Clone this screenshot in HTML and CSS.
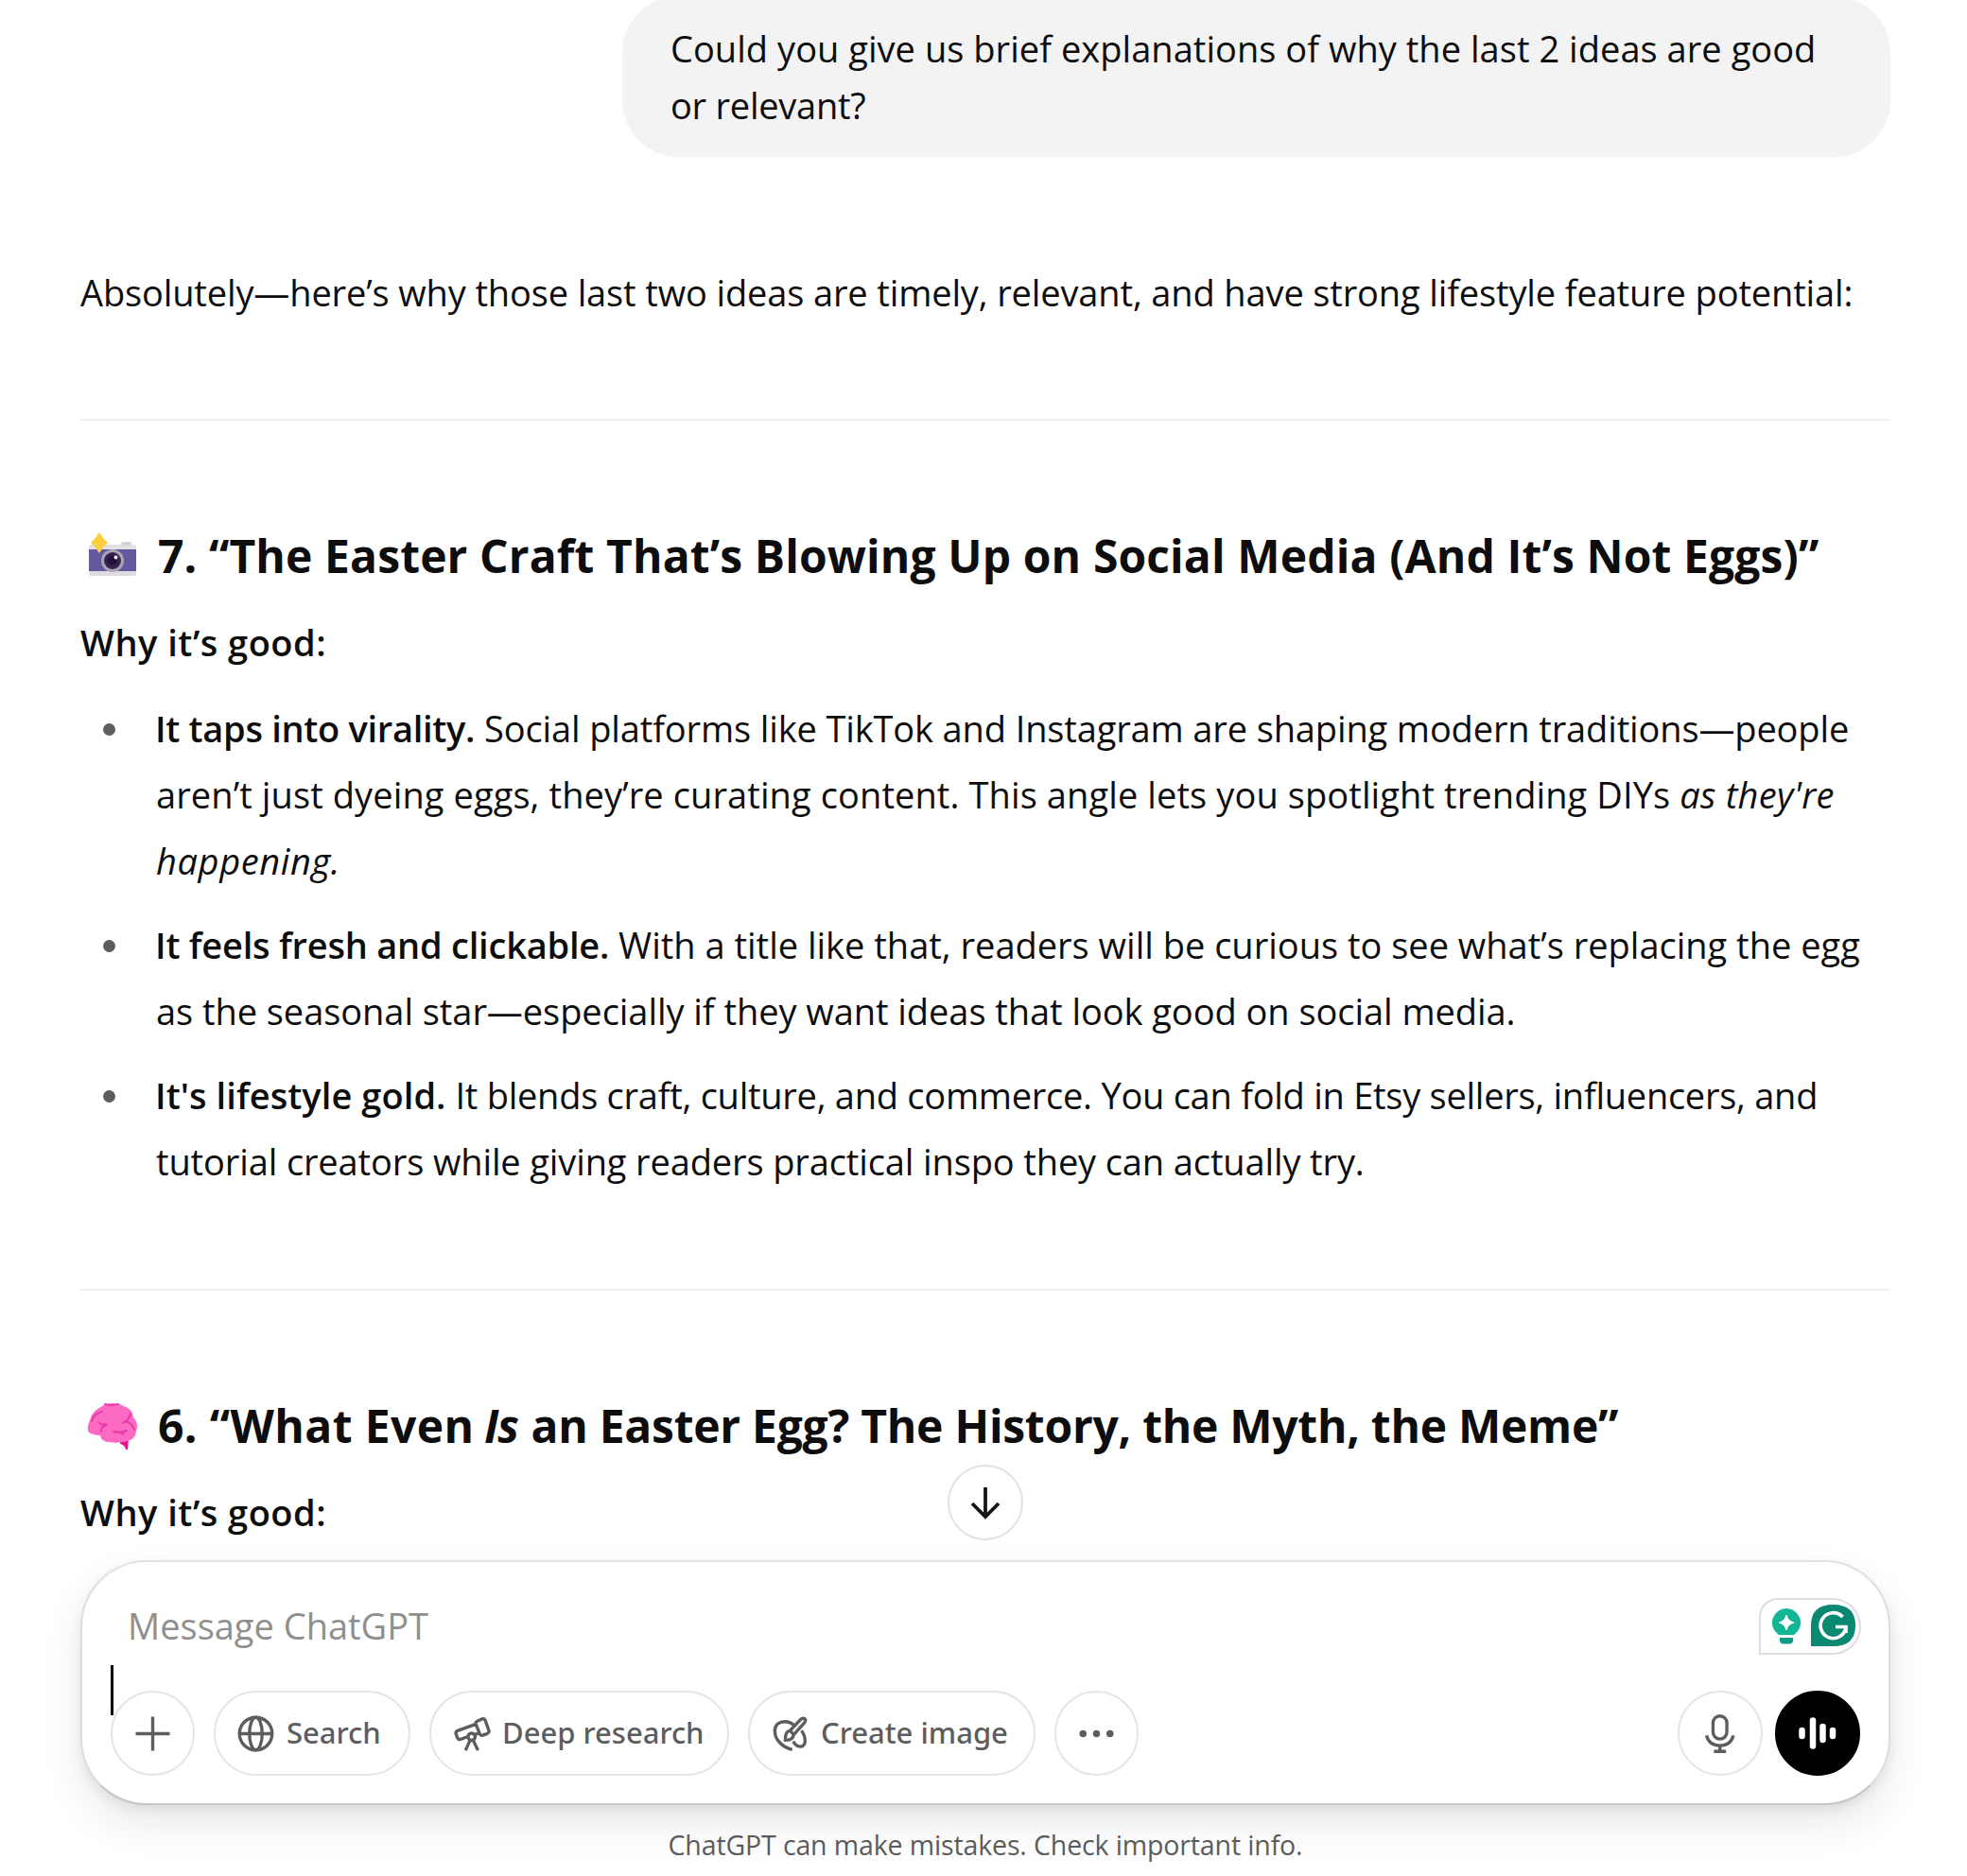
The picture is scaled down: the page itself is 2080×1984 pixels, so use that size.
FILE: index.html
```html
<!DOCTYPE html>
<html lang="en">
<head>
<meta charset="utf-8">
<title>ChatGPT</title>
<link rel="stylesheet" href="styles.css">
</head>
<body>
<div class="page">
  <main class="thread">
    <div class="bubble"><span class="line t1">Could you give us brief explanations of why the last 2 ideas are good</span> <span class="line t2">or relevant?</span></div>

    <p class="intro">Absolutely—here’s why those last two ideas are timely, relevant, and have strong lifestyle feature potential:</p>
    <hr>

    <h3 class="title">
      <svg class="emoji" viewBox="0 0 54 54" aria-hidden="true">
        <rect x="3" y="15" width="50" height="12" rx="3" fill="#e4e1e6"/>
        <rect x="37" y="12" width="11" height="4" rx="2" fill="#d5d2d8"/>
        <rect x="3" y="20" width="50" height="23" fill="#6458a0"/>
        <path d="M3 43h50v3q0 2-2 2H5q-2 0-2-2z" fill="#dedbe2"/>
        <circle cx="28" cy="32" r="12" fill="#aaa5b0"/>
        <circle cx="28" cy="32" r="9" fill="#35234f"/>
        <circle cx="28" cy="32" r="5" fill="#20133b"/>
        <circle cx="31.500" cy="28.500" r="2" fill="#f4effa"/>
        <path d="M14 3Q17 9 22 13Q17 17 14 23Q11 17 6 13Q11 9 14 3Z" fill="#fccf3c" stroke="#fccf3c" stroke-width="1.500" stroke-linejoin="round"/>
      </svg>
      <span class="h7">7. “The Easter Craft That’s Blowing Up on Social Media (And It’s Not Eggs)”</span>
    </h3>
    <p class="why">Why it’s good:</p>
    <ul>
      <li><span class="line"><b class="b1">It taps into virality.</b> <span class="t3">Social platforms like TikTok and Instagram are shaping modern traditions—people</span></span>
        <span class="line"><span class="t4">aren’t just dyeing eggs, they’re curating content. This angle lets you spotlight trending DIYs</span> <em>as they're</em></span>
        <span class="line"><em class="t5">happening.</em></span></li>
      <li><span class="line"><b class="b2">It feels fresh and clickable.</b> <span class="t6">With a title like that, readers will be curious to see what’s replacing the egg</span></span>
        <span class="line t7">as the seasonal star—especially if they want ideas that look good on social media.</span></li>
      <li><span class="line"><b class="b3">It's lifestyle gold.</b> <span class="t8">It blends craft, culture, and commerce. You can fold in Etsy sellers, influencers, and</span></span>
        <span class="line t9">tutorial creators while giving readers practical inspo they can actually try.</span></li>
    </ul>
    <hr>

    <h3 class="title">
      <svg class="emoji" viewBox="0 0 54 54" aria-hidden="true">
        <path d="M36 40h9l-1 12h-2q-1-5-6-6z" fill="#e6128e"/>
        <path d="M14 8Q27-1 40 6Q49 9 50 18Q56 24 53 33Q52 41 44 43Q34 46 23 44Q16 43 15 37Q8 37 3 34Q0 29 4 21Q6 12 14 8Z" fill="#fc6ac4"/>
        <path d="M20 4q7 2 14 0M6 22q2-8 11-10M47 14q-2 8-8 10M42 22q7 2 9 9M13 23q3 4 8 2M16 33q-1-5 6-7M29 33q7 2 14-1M38 36l3-4" fill="none" stroke="#e83ba8" stroke-width="2" stroke-linecap="round"/>
      </svg>
      <span><span class="h6a">6. “What Even</span> <i>Is</i> <span class="h6b">an Easter Egg? The History, the Myth, the Meme”</span></span>
    </h3>
    <p class="why">Why it’s good:</p>
  </main>

  <section class="composer">
    <button class="scroll" aria-label="Scroll to bottom">
      <svg width="40" height="40" viewBox="0 0 40 40"><path d="M20 4v30M6 21l14 14 14-14" fill="none" stroke="#161616" stroke-width="3.800"/></svg>
    </button>
    <div class="caret"></div>
    <div class="grammar">
      <svg width="32" height="40" viewBox="0 0 32 40">
        <path d="M16 1a15 15 0 0 1 8.500 27.400V29h-17v-.6A15 15 0 0 1 16 1z" fill="#12b594"/>
        <path d="M16 8q1.500 6.500 8 8q-6.500 1.500-8 8q-1.500-6.500-8-8q6.500-1.500 8-8z" fill="#fff" stroke="#fff"/>
        <path d="M9 32h14v2.500q0 4-4 4h-6q-4 0-4-4z" fill="#0c9c84"/>
      </svg>
      <svg width="47" height="44" viewBox="0 0 47 44">
        <path d="M0 44V22Q0 0 23.500 0T47 22T23.500 44z" fill="#0b8872"/>
        <path d="M33.500 13A13.500 13.500 0 1 0 37 23.500H26M37 22v8" fill="none" stroke="#fff" stroke-width="3.600"/>
      </svg>
    </div>
    <div class="placeholder">Message ChatGPT</div>
    <div class="tools">
      <button class="round"><svg class="ic" viewBox="0 0 24 24"><path d="M12 2.400v19.200M2.400 12h19.200"/></svg></button>
      <button class="pill search"><svg class="ic" viewBox="0 0 24 24"><circle cx="12" cy="12" r="9.200"/><ellipse cx="12" cy="12" rx="3.600" ry="9.200"/><path d="M2.800 12h18.400"/></svg><span>Search</span></button>
      <button class="pill deep"><svg class="ic" viewBox="0 0 24 24"><path d="M15.300 4.900L18 3.700q1.300-.5 1.800.8l2 5.600q.4 1.300-.8 1.800l-2.600 1q-1.200.4-1.700-.8L14.500 6.600q-.4-1.200.8-1.700zM14.500 6.600L4.200 10.300q-1.300.5-.9 1.800l.8 2.200q.5 1.200 1.800.8l4.300-1.500M14 12.500l2.500-.9"/><circle cx="12.100" cy="13.700" r="2"/><path d="M11.300 15.500L8.700 21.400M12.900 15.500l2.800 5.900"/></svg><span>Deep research</span></button>
      <button class="pill create"><svg class="ic" viewBox="0 0 24 24"><path d="M13.200 21C7.500 19.500 3.400 15.500 3.400 10.500C3.400 6.800 6 5.200 9 5.200q3 0 5 1.800"/><path d="M9.300 15.600c-.1-2.600.2-5 2.700-5.400L18 3.900q1.500-1 2.300-.3t-.2 2.200L14 12.600c-.3 2.400-2.300 3.100-4.700 3zM12 10.200l2 2.400"/><path d="M18.500 10.200c2.300 3.500 2.600 7.600.6 8.700c-2 1.100-4.700-.6-5.300-2.600"/></svg><span>Create image</span></button>
      <button class="round"><svg class="ic dots" viewBox="0 0 24 24"><circle cx="4.400" cy="12" r="2"/><circle cx="12" cy="12" r="2"/><circle cx="19.600" cy="12" r="2"/></svg></button>
      <span class="spacer"></span>
      <button class="round mic"><svg class="ic" viewBox="0 0 24 24"><rect x="7.700" y="2" width="7.800" height="13" rx="3.900"/><path d="M4 13q1.500 5.700 7.600 5.700T19.200 13M11.600 18.700v3M8.200 22h6.800"/></svg></button>
      <button class="round voice"><svg width="44" height="44" viewBox="0 0 44 44"><path d="M5.500 19v6M17 8.500v27M27.500 15v14M38 19v6" stroke="#fff" stroke-width="6.500" stroke-linecap="round"/></svg></button>
    </div>
  </section>
  <footer>ChatGPT can make mistakes. Check important info.</footer>
</div>
</body>
</html>
```
FILE: styles.css
```css
* { box-sizing: border-box; }
body { margin: 0; background: #fff; color: #0d0d0d; font: 38px/70px "Open Sans", "Noto Sans", sans-serif; }
p, h3, ul { margin: 0; padding: 0; }
button { font: inherit; color: inherit; padding: 0; }
svg { display: block; flex: none; }

.page { display: flex; flex-direction: column; width: 1914px; height: 1984px; margin-left: 85px; overflow: visible; white-space: nowrap; }
.thread { display: flex; flex-direction: column; height: 1650px; }
.line { display: block; }

.bubble { align-self: flex-end; flex: none; width: 1341px; height: 170px; margin-top: -4px; padding: 25px 51px; border-radius: 60px; background: #f3f3f3; line-height: 60px; }
.intro { margin-top: 108px; letter-spacing: -.13px; }
hr { width: 100%; height: 2px; margin: 99px 0 106px; border: 0; background: #efefef; flex: none; }
ul + hr { margin-top: 100px; }

.title { display: flex; align-items: center; gap: 22px; padding-left: 6px; font-size: 48px; font-weight: 700; line-height: 70px; }
.title .emoji { width: 54px; height: 54px; margin-top: 4px; }
.title > span { padding-top: 2px; margin-bottom: -2px; }
.title i { margin: 0 1px 0 -2px; letter-spacing: -1px; }
.h7 { letter-spacing: .12px; }
.h6a { letter-spacing: .4px; }
.h6b { letter-spacing: -.26px; }

.why { margin-top: 23px; font-weight: 600; letter-spacing: .5px; }
ul { display: flex; flex-direction: column; gap: 19px; margin-top: 21px; list-style: none; }
li { position: relative; padding-left: 80px; }
li::before { content: ""; position: absolute; left: 24px; top: 30px; width: 13px; height: 13px; border-radius: 50%; background: #5d5d5d; }
b { font-weight: 600; margin-left: -1px; }
em { letter-spacing: .3px; }

.t1 { letter-spacing: .04px; }
.t2 { letter-spacing: -.25px; }
.t3 { letter-spacing: -.13px; }
.t4 { letter-spacing: .1px; }
.t5 { letter-spacing: .6px; }
.t7 { letter-spacing: -.05px; }
.t8 { letter-spacing: -.26px; }
.t9 { letter-spacing: -.12px; }
.b1 { letter-spacing: -.3px; }
.b2 { letter-spacing: -.22px; }
.b3 { letter-spacing: .07px; }

.composer { position: relative; height: 259px; padding: 37px 30px 0 30px; border: 2px solid #dedede; border-top-color: #e2e2e2; border-bottom-color: #c6c6c6; border-radius: 70px; background: #fff; box-shadow: 0 5px 12px rgba(0,0,0,.07), 0 20px 45px rgba(0,0,0,.09); }
.placeholder { height: 60px; padding-left: 18px; line-height: 60px; color: #8f8f8f; }
.tools { display: flex; align-items: center; gap: 20px; margin-top: 39px; color: #5d5d5d; font: 500 31px/60px "Noto Sans", sans-serif; letter-spacing: -.4px; }
.round, .pill { display: flex; align-items: center; height: 90px; border: 2px solid #e5e5e5; border-radius: 45px; background: #fff; }
.round { justify-content: center; width: 89px; }
.pill { gap: 10px; padding-left: 20px; }
.pill span { margin-top: -3px; }
.search { width: 208px; }
.deep { width: 317px; }
.create { width: 304px; }
.spacer { flex: 1; }
.mic { width: 90px; margin-right: -7px; }
.voice { width: 90px; background: #000; border-color: #000; }
.ic { width: 45px; height: 45px; fill: none; stroke: currentColor; stroke-width: 1.800; }
.dots { fill: currentColor; stroke: none; }

.scroll { position: absolute; left: 915px; top: -103px; display: flex; align-items: center; justify-content: center; width: 80px; height: 80px; border: 2px solid #e2e2e2; border-radius: 50%; background: #fff; }
.caret { position: absolute; left: 30px; top: 109px; width: 3px; height: 53px; background: #000; }
.grammar { position: absolute; right: 29px; top: 38px; display: flex; align-items: center; gap: 10px; width: 108px; height: 60px; padding-left: 11px; border: 2px solid #dddde6; border-radius: 20px 30px 30px 0; }
.grammar svg + svg { margin-top: -3px; }

footer { margin-top: 22px; text-align: center; font-size: 28.500px; line-height: 40px; letter-spacing: -.13px; color: #5d5d5d; }
```
